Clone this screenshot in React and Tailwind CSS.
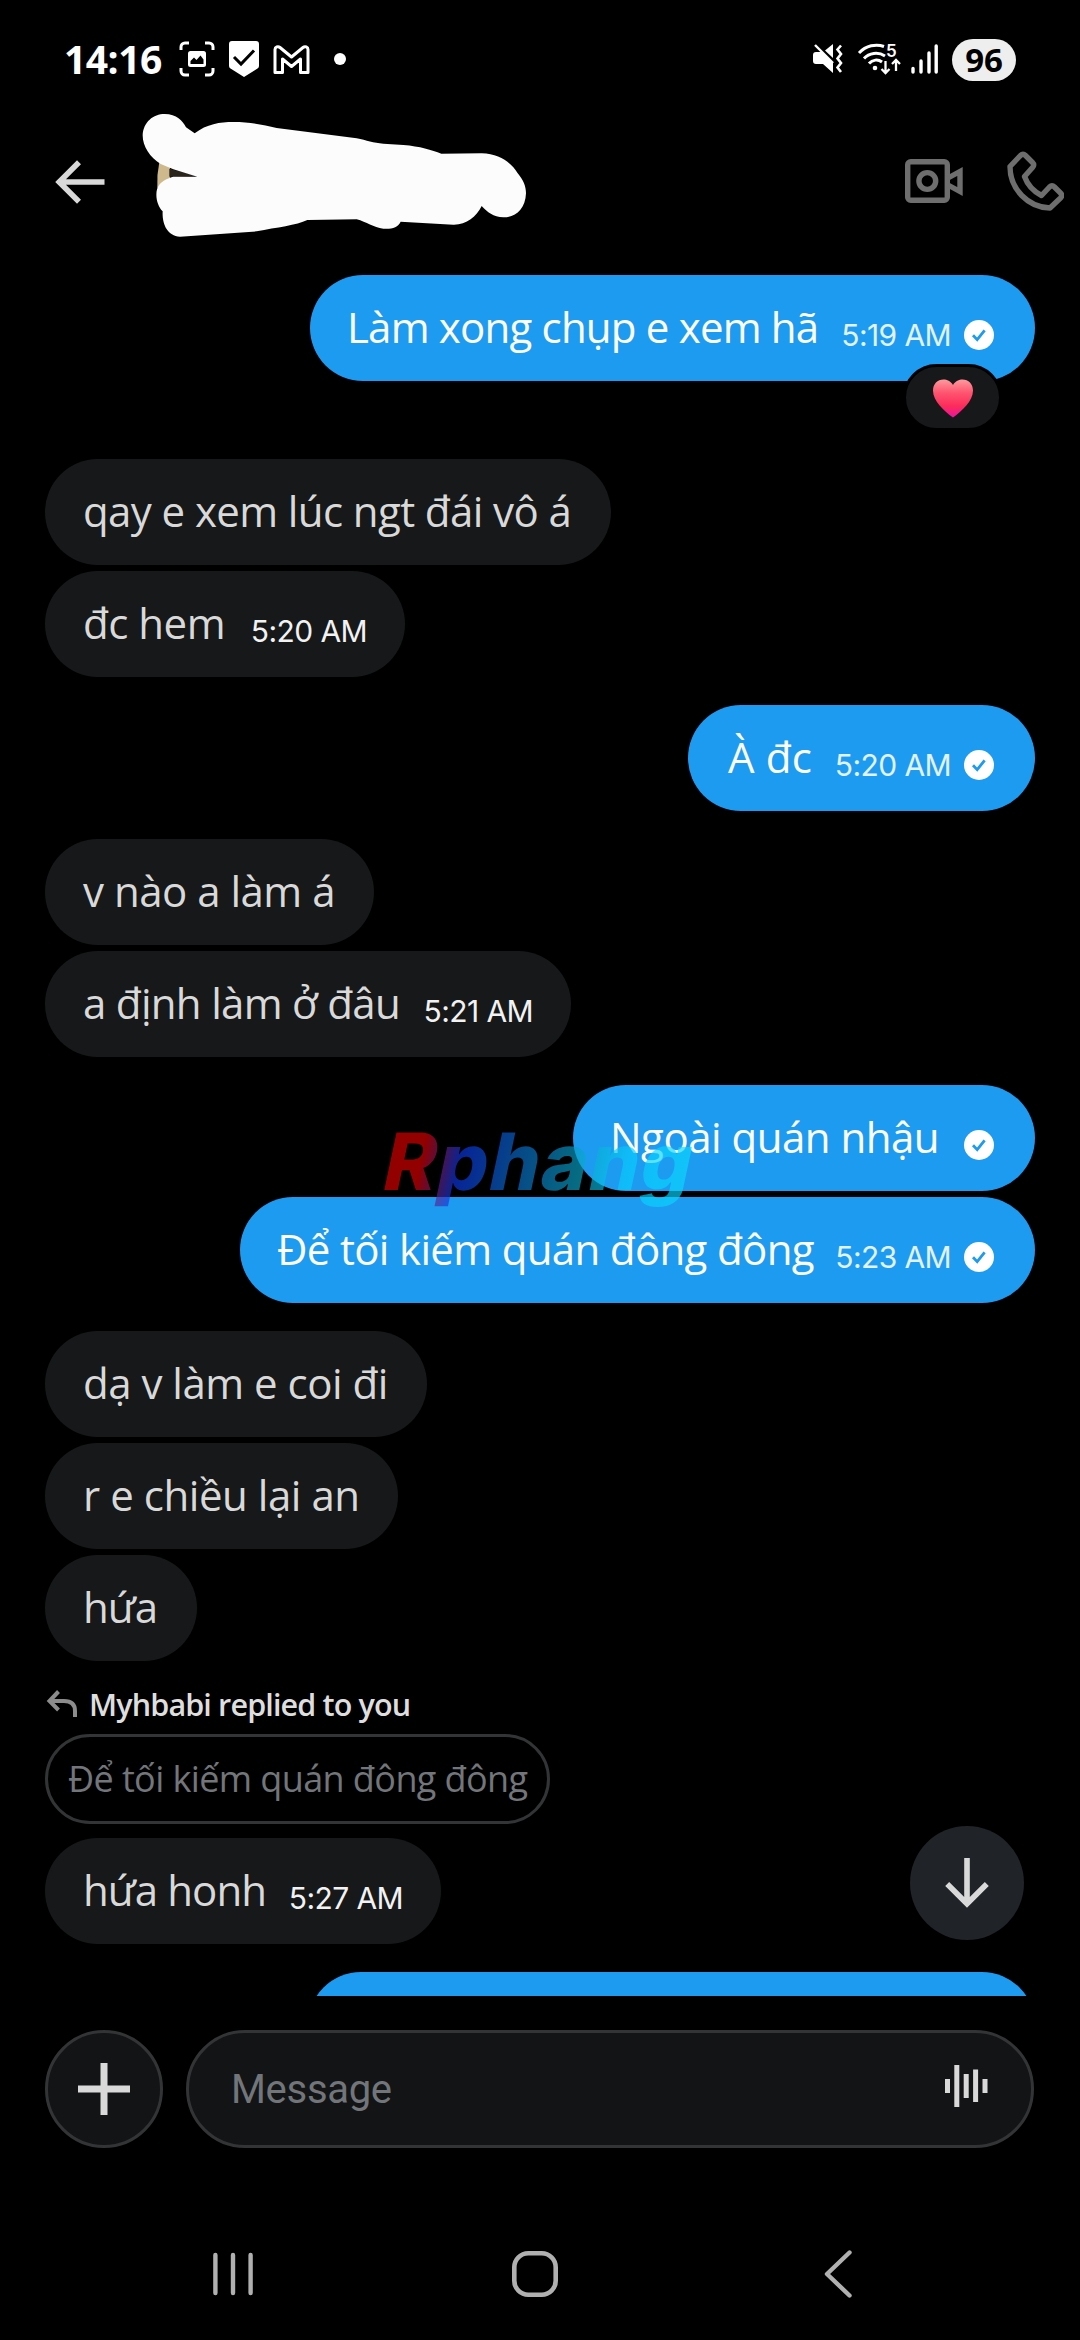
const TEXT = "font-['Open_Sans',sans-serif]";

function Verified() {
  return (
    <svg className="mt-[45px] ml-[13px] size-[30px] shrink-0" viewBox="0 0 30 30">
      <circle cx="15" cy="15" r="15" fill="#fff" />
      <path d="M9 15.2l4.2 4.4 7.4-9.2" fill="none" stroke="#1d9bf0" strokeWidth="2.8" />
    </svg>
  );
}

function Time({ children, className = '' }) {
  return (
    <span className={`mt-[42px] font-['Inter',sans-serif] text-[30px] leading-[36px] ${className}`}>{children}</span>
  );
}

function Received({ width, tracking, gap = 'mt-[6px]', time, timeTracking = 'tracking-[-0.6px]', children }) {
  return (
    <div className={`flex h-[106px] shrink-0 justify-between self-start rounded-full bg-[#16181a] pr-[38px] pl-[38px] whitespace-nowrap text-[#d9d9d9] ${gap} ${width}`}>
      <span className={`mt-[23px] ${TEXT} text-[42px] leading-[57px] ${tracking}`}>{children}</span>
      {time && <Time className={`text-[#f2f2f2] ${timeTracking}`}>{time}</Time>}
    </div>
  );
}

function Sent({ width, tracking, gap = 'mt-[6px]', time, timeTracking = 'tracking-[-0.6px]', reaction, children }) {
  return (
    <div className={`relative flex h-[106px] shrink-0 justify-between self-end rounded-full bg-[#1d9bf0] pr-[41px] pl-[37px] whitespace-nowrap text-white ${gap} ${width}`}>
      <span className={`mt-[23px] ${TEXT} text-[42px] leading-[57px] ${tracking}`}>{children}</span>
      <div className="flex items-start">
        {time && <Time className={`text-[#e3f3fe] ${timeTracking}`}>{time}</Time>}
        <Verified />
      </div>
      {reaction}
    </div>
  );
}

function Heart() {
  return (
    <div className="absolute top-[89px] right-[33px] flex h-[67px] w-[99px] items-center justify-center rounded-full border-[3px] border-black bg-[#16181a]">
      <svg className="mt-[2px] h-[39px] w-[42px]" viewBox="0 0 42 39">
        <defs>
          <linearGradient id="heart" x1="0" y1="0" x2="0" y2="1">
            <stop offset="0" stopColor="#ff9a9e" />
            <stop offset=".35" stopColor="#ff5470" />
            <stop offset=".7" stopColor="#fb2c5a" />
            <stop offset="1" stopColor="#f012a0" />
          </linearGradient>
        </defs>
        <path d="M21 6C18.500 2 15 0.500 11.500 0.500 5.500 0.500 1 5 1 11.500 1 22 12 32 21 38.500 30 32 41 22 41 11.500 41 5 36.500 0.500 30.500 0.500 27 0.500 23.500 2 21 6z" fill="url(#heart)" />
      </svg>
    </div>
  );
}

function StatusBar() {
  return (
    <div className="flex h-[118px] shrink-0 items-center pr-[64px] pl-[64px] text-white">
      <span className="font-['Open_Sans',sans-serif] text-[39px] leading-[54px] font-bold tracking-[-0.5px]">14:16</span>
      <svg className="ml-[17px] size-[36px]" viewBox="0 0 36 36">
        <path d="M2 9V6a4 4 0 0 1 4-4h4M26 2h4a4 4 0 0 1 4 4v3M34 27v3a4 4 0 0 1-4 4h-4M10 34H6a4 4 0 0 1-4-4v-3" fill="none" stroke="#fff" strokeWidth="3" />
        <rect x="9" y="10" width="18" height="16" rx="2.500" fill="#fff" />
        <path d="M11.500 23v-3l3.500-3.500 2.500 2.500 4-4.500 3 4v4.500z" fill="#000" />
      </svg>
      <svg className="ml-[14px] h-[36px] w-[30px]" viewBox="0 0 30 36">
        <path d="M3 0h24a3 3 0 0 1 3 3v22a3 3 0 0 1-1.500 2.600L15 36 1.500 27.600A3 3 0 0 1 0 25V3a3 3 0 0 1 3-3z" fill="#fff" />
        <path d="M5 16l7 7L25 9.500" fill="none" stroke="#000" strokeWidth="3" />
      </svg>
      <svg className="mt-[1px] ml-[14px] h-[30px] w-[37px]" viewBox="0 0 37 30">
        <path d="M2 4.500C2 2 5 .800 7 2.500L18.500 12 30 2.500C32 .800 35 2 35 4.500V27.500H27.500V14L18.500 21.500 9.500 14V27.500H2z" fill="none" stroke="#fff" strokeWidth="3" strokeLinejoin="round" />
      </svg>
      <span className="ml-[24px] size-[12px] rounded-full bg-white" />

      <div className="ml-auto flex items-center">
        <svg className="h-[30px] w-[30px]" viewBox="0 0 30 30">
          <path d="M3 8h6L20 18.500V29L10 20H3a3 3 0 0 1-3-3v-6a3 3 0 0 1 3-3zM12 6.500L20 0v14z" fill="#fff" />
          <path d="M2 1L20 19" stroke="#fff" strokeWidth="2.400" />
          <path d="M28 1.500l-3.500 4 3.500 4.500-3.500 4.500 3.500 4.500-3.500 4.500 3.500 4.500" fill="none" stroke="#fff" strokeWidth="2.600" />
        </svg>
        <svg className="ml-[15px] h-[32px] w-[44px] overflow-visible" viewBox="0 0 44 32">
          <g fill="none" stroke="#fff" strokeWidth="3">
            <path d="M1 10C8 2.500 18 .500 26 3.500" />
            <path d="M6 15.500C11 10 20 8.500 27 13" />
            <path d="M11 20.500c3.500-4 9-4.500 13-1.500" />
          </g>
          <circle cx="17" cy="25" r="2.300" fill="#fff" />
          <path d="M27.500 18v11.500M23.500 26l4 4 4-4M38 28V17.500M34 21l4-4 4 4" fill="none" stroke="#fff" strokeWidth="2.300" />
          <text x="28" y="14" fill="#fff" fontFamily="Inter, sans-serif" fontSize="17" fontWeight="600">5</text>
        </svg>
        <svg className="ml-[9px] h-[30px] w-[27px]" viewBox="0 0 27 30">
          <path d="M2 24.500v3.500M10 17v11M18 9v19M25.200 2v26" stroke="#fff" strokeWidth="3.400" strokeLinecap="round" />
        </svg>
        <div className="mt-[1px] ml-[14px] flex h-[42px] w-[64px] items-center justify-center rounded-full bg-[#eee]">
          <span className="font-['Open_Sans',sans-serif] text-[33px] leading-[42px] font-bold text-black">96</span>
        </div>
      </div>
    </div>
  );
}

function Header() {
  return (
    <div className="flex h-[129px] shrink-0 items-start">
      <svg className="mt-[42px] ml-[55px] h-[44px] w-[50px]" viewBox="0 0 50 44">
        <path d="M49.500 22H6M24 2.200L4.200 22 24 41.800" fill="none" stroke="#d9d9d9" strokeWidth="5.600" />
      </svg>
      <svg className="mt-[-6px] ml-[36px] h-[126px] w-[386px]" viewBox="333 36 1158 378">
        <path d="M388 186l32 12v42l-38 24q-2-40 6-78z" fill="#cdb98b" />
        <path d="M418 206l86 22-86 2z" fill="#29231c" />
        <path d="M404 42C440 42 458 62 468 82L494 100C530 72 570 66 610 66 660 66 700 74 740 84L980 115C1010 121 1030 129 1060 131L1120 135C1170 139 1205 150 1234 161L1355 160C1410 162 1445 190 1462 218 1480 240 1488 258 1488 280 1486 330 1455 352 1420 352 1390 351 1372 336 1355 318 1340 350 1308 375 1270 374L1112 365C1104 382 1085 388 1060 386 1030 382 1010 366 980 358L832 360C800 376 740 382 680 394L450 410C410 408 396 370 398 334 376 312 374 270 388 254 400 240 415 234 430 230L502 230 430 208 392 192C360 172 338 140 338 106 340 66 370 42 404 42z" fill="#fcfcfc" />
      </svg>
      <svg className="mt-[40px] ml-[376px] h-[48px] w-[60px]" viewBox="0 0 60 48">
        <g fill="none" stroke="#6e6e6e" strokeWidth="5.400">
          <rect x="4.700" y="3.700" width="39.600" height="38.600" rx="3" />
          <circle cx="24.300" cy="23" r="8.400" />
          <path d="M45 20l12-6.500v20L45 27" />
        </g>
      </svg>
      <svg className="mt-[32px] ml-[43px] h-[62px] w-[58px]" viewBox="0 0 58 62">
        <path d="M4 16.500L14.500 5.500q2.500-2.500 5 0l7 7q2.500 2.500 0 5L18.500 26.500Q23 39 35.500 45.500L43.500 37q2.500-2.500 5 0l6 6q2.500 2.500 0 5L44 58C22 57.500 4 39 4 16.500z" fill="none" stroke="#6e6e6e" strokeWidth="5.400" strokeLinejoin="round" />
      </svg>
    </div>
  );
}

function Watermark() {
  return (
    <div className="absolute top-[866px] left-[376px] origin-[0_76px] -skew-x-12 bg-[linear-gradient(90deg,#e00000_0%,#e00000_12%,#0b38e8_24%,#0a70d0_42%,#0aa8c8_62%,#08cfff_76%,#0cdcff_100%)] bg-clip-text pr-3 pl-1 font-['Inter',sans-serif] text-[79px] leading-[96px] font-extrabold tracking-[1.5px] text-transparent opacity-65">
      Rphang
    </div>
  );
}

export default function App() {
  return (
    <div className="flex h-[2340px] w-[1080px] flex-col overflow-hidden bg-black">
      <StatusBar />
      <Header />
      <div className="relative flex h-[1749px] shrink-0 flex-col overflow-hidden pr-[45px] pl-[45px]">
        <Sent gap="mt-[28px]" width="w-[725px]" tracking="tracking-[-0.8px]" time="5:19 AM" reaction={<Heart />}>Làm xong chụp e xem hã</Sent>
        <Received gap="mt-[78px]" width="w-[566px]" tracking="tracking-[-0.6px]">qay e xem lúc ngt đái vô á</Received>
        <Received width="w-[360px]" tracking="tracking-[-0.5px]" time="5:20 AM">đc hem</Received>
        <Sent gap="mt-[28px]" width="w-[347px]" tracking="tracking-[0.2px]" time="5:20 AM"><span className="ml-[3px]">À đc</span></Sent>
        <Received gap="mt-[28px]" width="w-[329px]" tracking="tracking-[-0.5px]">v nào a làm á</Received>
        <Received width="w-[526px]" tracking="tracking-[-0.7px]" time="5:21 AM">a định làm ở đâu</Received>
        <Sent gap="mt-[28px]" width="w-[462px]" tracking="tracking-[-0.5px]">Ngoài quán nhậu</Sent>
        <Sent width="w-[795px]" tracking="tracking-[-0.67px]" time="5:23 AM">Để tối kiếm quán đông đông</Sent>
        <Received gap="mt-[28px]" width="w-[382px]" tracking="tracking-[-0.5px]">dạ v làm e coi đi</Received>
        <Received width="w-[353px]" tracking="tracking-[-0.45px]">r e chiều lại an</Received>
        <Received width="w-[152px]" tracking="tracking-[-0.9px]">hứa</Received>
        <div className="mt-[21px] flex h-[44px] shrink-0 items-center">
          <svg className="ml-[1px] h-[28px] w-[32px]" viewBox="0 0 32 28">
            <path d="M3 11H18q11 0 11 10v6M12.500 1.500L3.500 11l9 9" fill="none" stroke="#8c8c8c" strokeWidth="4" />
          </svg>
          <span className="ml-[11px] font-['Open_Sans',sans-serif] text-[30.500px] leading-[42px] font-semibold tracking-[-0.85px] text-[#dedede]">Myhbabi replied to you</span>
        </div>
        <div className="mt-[8px] flex h-[90px] w-[505px] shrink-0 items-center rounded-full border-[3px] border-[#323436] pl-[20px] whitespace-nowrap">
          <span className="font-['Open_Sans',sans-serif] text-[36px] leading-[50px] tracking-[-0.6px] text-[#72767a]">Để tối kiếm quán đông đông</span>
        </div>
        <Received gap="mt-[14px]" width="w-[396px]" tracking="tracking-[-0.9px]" time="5:27 AM">hứa honh</Received>
        <div className="mt-[28px] h-[106px] w-[727px] shrink-0 self-end rounded-full bg-[#1d9bf0]" />

        <Watermark />
        <div className="absolute top-[1579px] left-[910px] flex size-[114px] items-center justify-center rounded-full bg-[#202327]">
          <svg className="h-[50px] w-[44px]" viewBox="0 0 44 50">
            <path d="M22 0v44M2.200 26L22 45.800 41.800 26" fill="none" stroke="#d9d9d9" strokeWidth="5.600" />
          </svg>
        </div>
      </div>

      <div className="mt-[34px] flex h-[118px] shrink-0 gap-[23px] pr-[46px] pl-[45px]">
        <div className="flex size-[118px] shrink-0 items-center justify-center rounded-full border-[3px] border-[#323436] bg-[#131416]">
          <svg className="size-[52px]" viewBox="0 0 52 52">
            <path d="M0 26h52M26 0v52" stroke="#d9d9d9" strokeWidth="7" />
          </svg>
        </div>
        <div className="flex flex-1 items-center justify-between rounded-full border-[3px] border-[#323436] bg-[#131416] pr-[43px] pl-[42px]">
          <span className="mt-[2px] font-['Roboto',sans-serif] text-[40px] leading-[48px] tracking-[-0.3px] text-[#72767a]">Message</span>
          <svg className="mt-[-6px] h-[42px] w-[43px]" viewBox="0 0 43 42">
            <path d="M2.500 14v14M11.800 0v42M21.200 9v24M30.600 4.500v32.500M40 14v14" stroke="#d9d9d9" strokeWidth="5" />
          </svg>
        </div>
      </div>

      <div className="mt-[100px] flex h-[52px] shrink-0 items-center justify-between pr-[228px] pl-[213px]">
        <svg className="h-[44px] w-[40px]" viewBox="0 0 40 44">
          <path d="M2.400 3v38M20 3v38M37.600 3v38" stroke="#b0b0b0" strokeWidth="4.400" strokeLinecap="round" />
        </svg>
        <svg className="mr-[7px] size-[46px]" viewBox="0 0 46 46">
          <rect x="2.300" y="2.300" width="41.400" height="41.400" rx="14" fill="none" stroke="#b0b0b0" strokeWidth="4.600" />
        </svg>
        <svg className="h-[48px] w-[28px]" viewBox="0 0 28 48">
          <path d="M25.500 2.500L3 24l22.500 21.500" fill="none" stroke="#b0b0b0" strokeWidth="4.400" strokeLinecap="round" strokeLinejoin="round" />
        </svg>
      </div>
    </div>
  );
}
